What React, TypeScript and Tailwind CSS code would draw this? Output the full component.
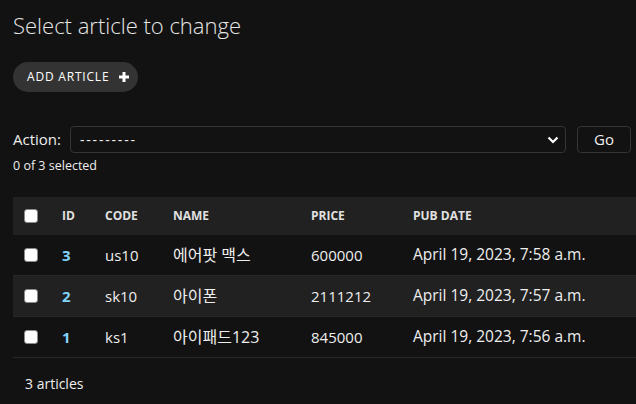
import React from "react";

const rows = [
  { id: 3, code: "us10", name: "에어팟 맥스", price: "600000", date: "April 19, 2023, 7:58 a.m.", alt: false },
  { id: 2, code: "sk10", name: "아이폰", price: "2111212", date: "April 19, 2023, 7:57 a.m.", alt: true },
  { id: 1, code: "ks1", name: "아이패드123", price: "845000", date: "April 19, 2023, 7:56 a.m.", alt: false },
];

function Check() {
  return <div className="w-[14px] h-[14px] bg-white border border-[#8a8a8a] rounded-[3px]" />;
}

export default function App() {
  return (
    <div
      className="w-[636px] h-[404px] bg-[#121212] overflow-hidden text-[#eeeeee]"
      style={{ fontFamily: '"Open Sans", "Noto Sans CJK KR", sans-serif' }}
    >
      <div className="pl-[13px]">
        <h1 className="pt-[10px] h-[62px] text-[22px] leading-[30px] font-light text-[#e6e6e6]">
          Select article to change
        </h1>
        <div className="flex">
          <div className="h-[30px] w-[125px] rounded-full bg-[#333333] flex items-center pl-[14px] gap-[9px]">
            <span className="text-[12px] tracking-[0.8px] text-white">ADD ARTICLE</span>
            <svg width="12" height="12" viewBox="0 0 12 12">
              <path d="M6 1v10M1 6h10" stroke="#ffffff" strokeWidth="3" />
            </svg>
          </div>
        </div>
        <div className="mt-[34px] flex items-center h-[27px]">
          <span className="text-[15px] w-[57px]">Action:</span>
          <div className="w-[496px] h-[27px] border border-[#353535] rounded-[4px] flex items-center justify-between pl-[9px] pr-[6px]">
            <span className="text-[14px] tracking-[1.8px]">---------</span>
            <svg width="12" height="8" viewBox="0 0 12 8">
              <path d="M1.5 1.5L6 6L10.5 1.5" stroke="#ffffff" strokeWidth="2.2" fill="none" />
            </svg>
          </div>
          <div className="ml-[11px] w-[54px] h-[27px] border border-[#353535] rounded-[4px] flex items-center justify-center text-[15px]">
            Go
          </div>
        </div>
        <div className="mt-[4px] h-[17px] text-[12.5px] leading-[17px]">0 of 3 selected</div>
        <div className="mt-[23px]">
          <div className="flex h-[38px] items-center bg-[#212121] text-[12px] font-bold text-[#e0e0e0]">
            <div className="w-[38px] pl-[11px]"><Check /></div>
            <div className="w-[43px] pl-[11px]">ID</div>
            <div className="w-[68px] pl-[11px]">CODE</div>
            <div className="w-[138px] pl-[11px]">NAME</div>
            <div className="w-[102px] pl-[11px]">PRICE</div>
            <div className="flex-1 pl-[11px]">PUB DATE</div>
          </div>
          {rows.map((r) => (
            <div
              key={r.id}
              className={`flex h-[41px] items-center border-b border-[#272727] text-[15px] ${r.alt ? "bg-[#212121]" : "bg-[#121212]"}`}
            >
              <div className="w-[38px] pl-[11px]"><Check /></div>
              <div className="w-[43px] pl-[11px] font-bold text-[#81d4fa]">{r.id}</div>
              <div className="w-[68px] pl-[11px]">{r.code}</div>
              <div className="w-[138px] pl-[11px] text-[16px]">{r.name}</div>
              <div className="w-[102px] pl-[11px]">{r.price}</div>
              <div className="flex-1 pl-[11px] text-[15.5px]">{r.date}</div>
            </div>
          ))}
          <div className="h-[50px] flex items-center pl-[12px] text-[14px]">3 articles</div>
        </div>
      </div>
    </div>
  );
}
